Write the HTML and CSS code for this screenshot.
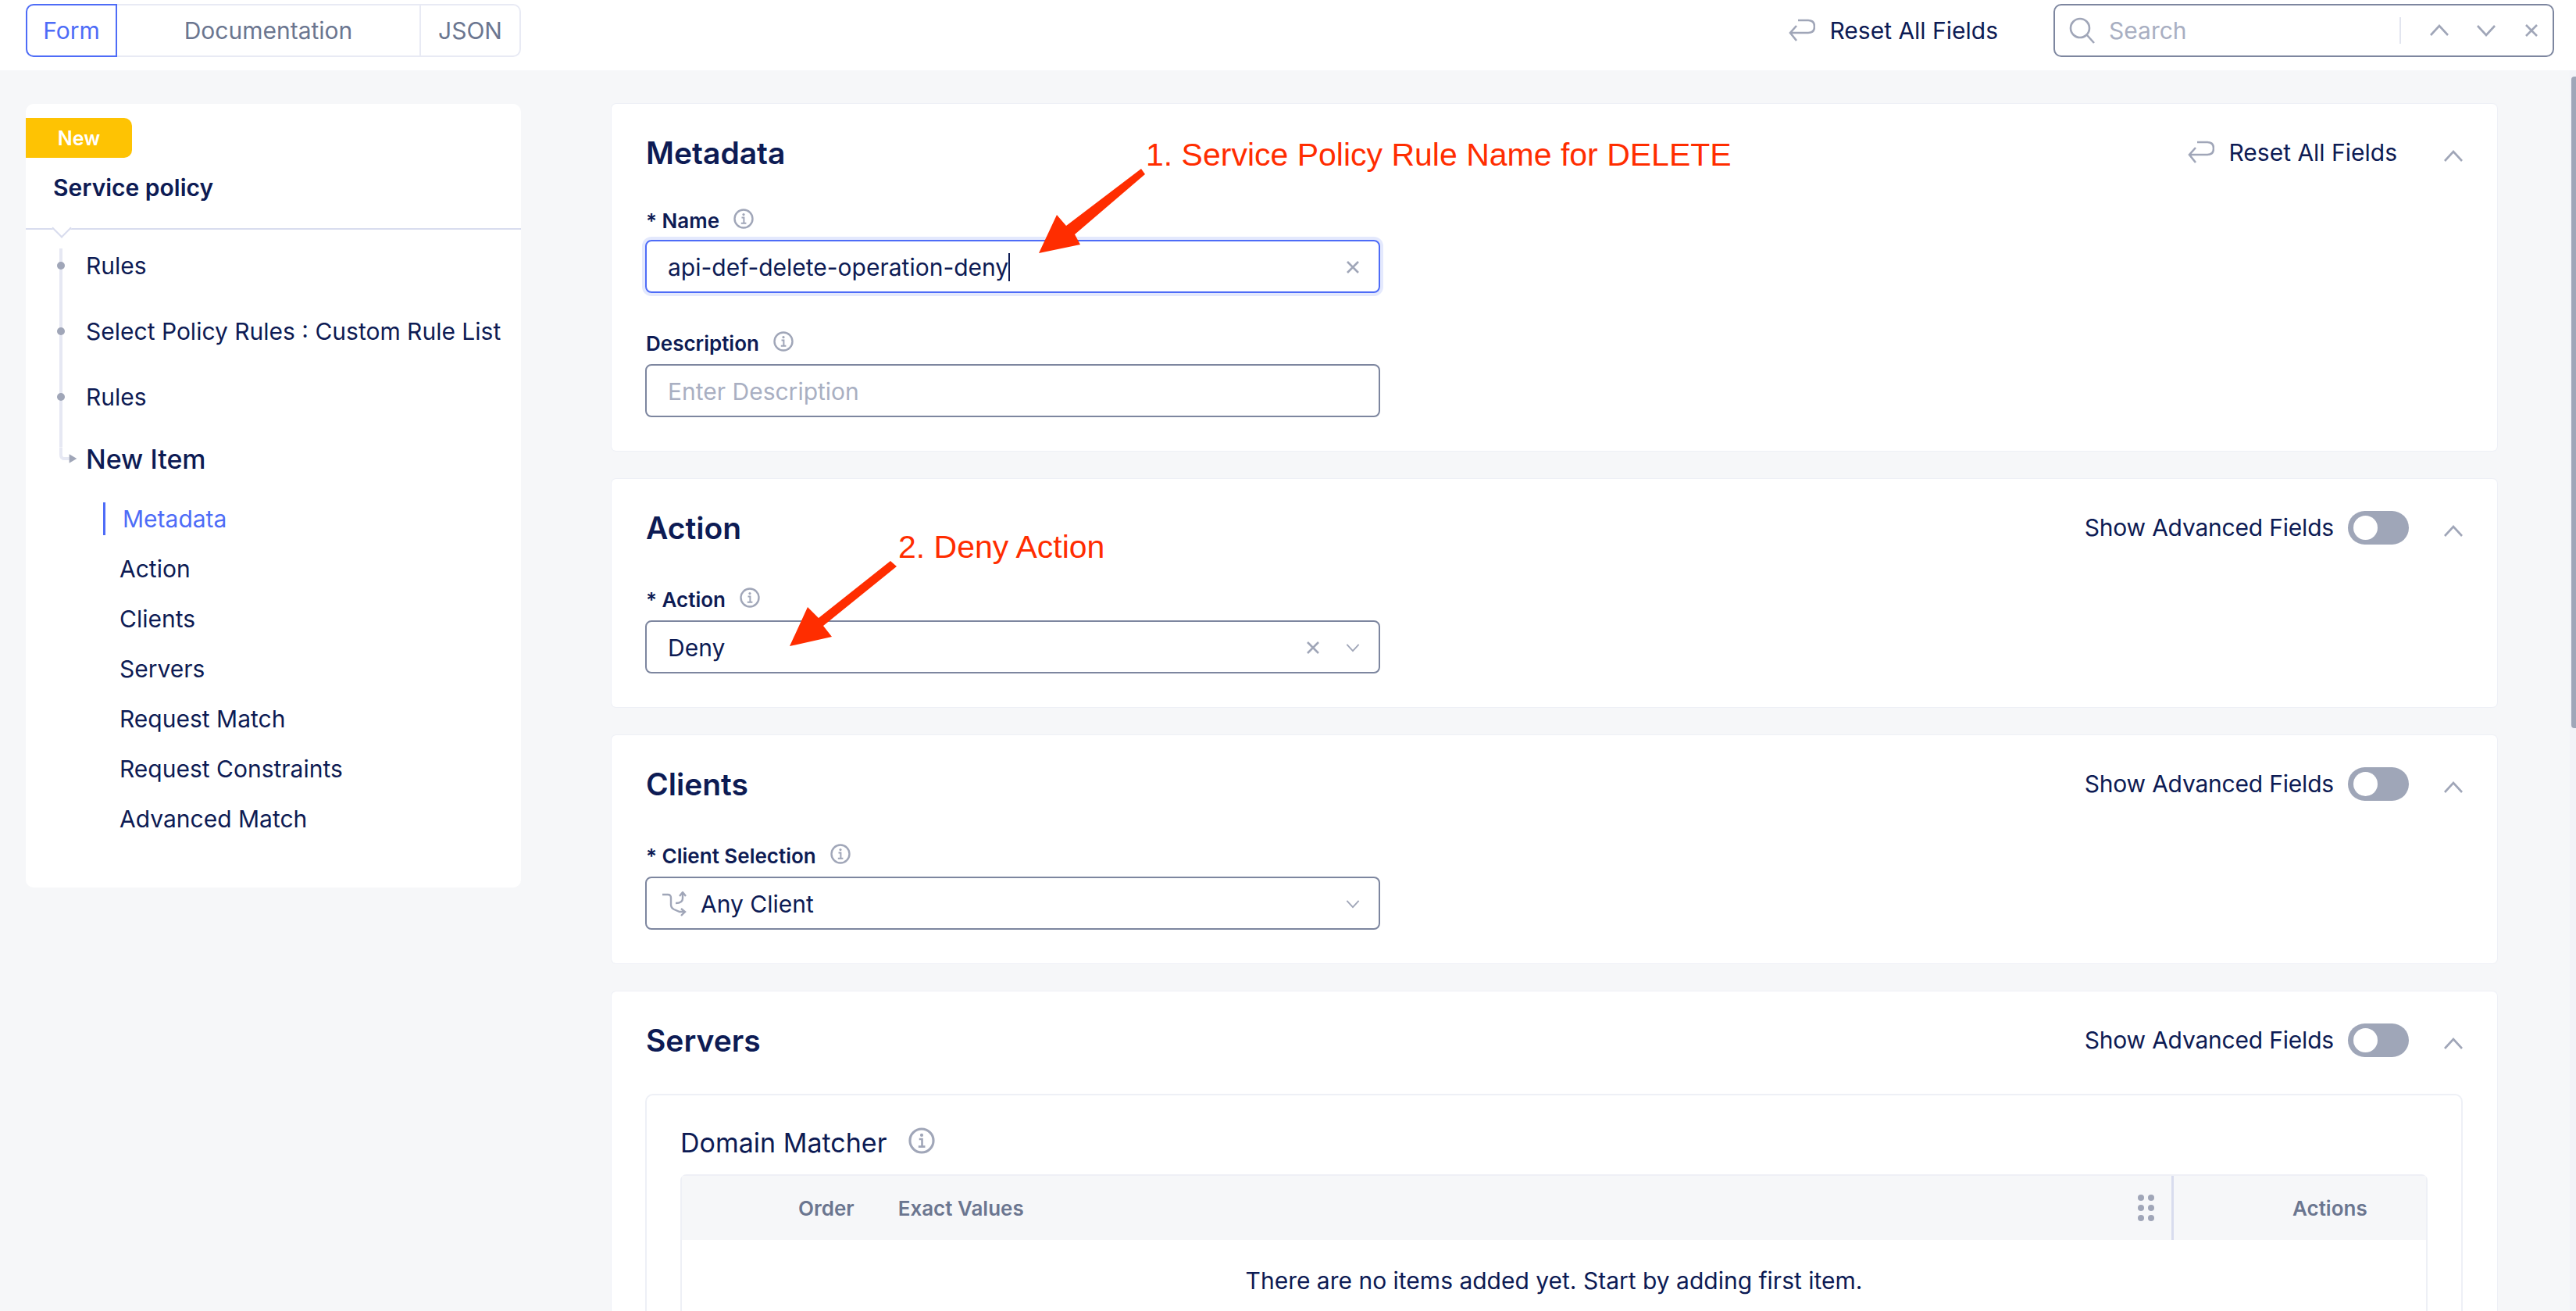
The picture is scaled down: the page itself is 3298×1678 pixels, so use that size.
FILE: index.html
```html
<!DOCTYPE html>
<html lang="en">
<head>
  <meta charset="UTF-8" />
  <title>Service policy</title>
  <link rel="stylesheet" href="styles.css">
</head>
<body>
  <svg width="0" height="0" class="defs">
    <symbol id="i-reset" viewBox="0 0 34 30"><path d="M12 2H25Q33 2 33 10T25 18H2M10 9L2 18L10 28" fill="none" stroke="currentColor" stroke-width="2.6"/></symbol>
    <symbol id="i-up" viewBox="0 0 26 16"><path d="M2 14L13 2L24 14" fill="none" stroke="currentColor" stroke-width="2.6"/></symbol>
    <symbol id="i-down" viewBox="0 0 26 16"><path d="M2 2L13 14L24 2" fill="none" stroke="currentColor" stroke-width="2.6"/></symbol>
    <symbol id="i-x" viewBox="0 0 18 18"><path d="M2 2L16 16M16 2L2 16" fill="none" stroke="currentColor" stroke-width="2.6"/></symbol>
    <symbol id="i-info" viewBox="0 0 26 26"><circle cx="13" cy="13" r="11.5" fill="none" stroke="currentColor" stroke-width="2.4"/><circle cx="13" cy="7.6" r="1.6" fill="currentColor"/><path d="M10.5 11.5H13.4V18.6M9.8 18.8H16.4" fill="none" stroke="currentColor" stroke-width="2"/></symbol>
  </svg>

  <header class="topbar">
    <div class="tabs">
      <div class="tab tab-active">Form</div>
      <div class="tab tab-docs">Documentation</div>
      <div class="tab tab-json">JSON</div>
    </div>
    <div class="topbar-right">
      <div class="reset"><svg class="ico-reset"><use href="#i-reset"/></svg><span>Reset All Fields</span></div>
      <div class="search">
        <svg class="ico-search" viewBox="0 0 34 34"><circle cx="14" cy="14" r="12" fill="none" stroke="currentColor" stroke-width="2.6"/><path d="M23 23L32 33" stroke="currentColor" stroke-width="2.6"/></svg>
        <span class="search-text">Search</span>
        <span class="search-sep"></span>
        <svg class="ico-chev"><use href="#i-up"/></svg>
        <svg class="ico-chev"><use href="#i-down"/></svg>
        <svg class="ico-x"><use href="#i-x"/></svg>
      </div>
    </div>
  </header>

  <div class="page">
    <aside class="side">
      <div class="side-head">
        <div class="badge">New</div>
        <div class="side-title">Service policy</div>
      </div>
      <div class="side-nav">
        <ul class="steps">
          <li><i class="dot"></i>Rules</li>
          <li><i class="dot"></i>Select Policy Rules : Custom Rule List</li>
          <li><i class="dot"></i>Rules</li>
        </ul>
        <div class="step-current">
          <svg class="elbow" viewBox="0 0 35 30"><path d="M2 0V10Q2 15 7 15H13" fill="none" stroke="#e6e8f3" stroke-width="4"/><path d="M13 9L23 15L13 21Z" fill="#a0a6b8"/></svg>
          <span>New Item</span>
        </div>
        <ul class="sub">
          <li class="sub-active">Metadata</li>
          <li>Action</li>
          <li>Clients</li>
          <li>Servers</li>
          <li>Request Match</li>
          <li>Request Constraints</li>
          <li>Advanced Match</li>
        </ul>
      </div>
    </aside>

    <main class="main">
      <section class="card card-meta">
        <div class="card-head">
          <h2>Metadata</h2>
          <div class="reset"><svg class="ico-reset"><use href="#i-reset"/></svg><span>Reset All Fields</span></div>
          <svg class="ico-chev head-chev"><use href="#i-up"/></svg>
        </div>
        <div class="field field-name">
          <label class="label">* Name <svg class="ico-info"><use href="#i-info"/></svg></label>
          <div class="input input-focus"><span class="value">api-def-delete-operation-deny</span><i class="caret"></i><svg class="ico-x push"><use href="#i-x"/></svg></div>
        </div>
        <div class="field field-desc">
          <label class="label">Description <svg class="ico-info"><use href="#i-info"/></svg></label>
          <div class="input"><span class="placeholder">Enter Description</span></div>
        </div>
      </section>

      <section class="card">
        <div class="card-head">
          <h2>Action</h2>
          <div class="adv"><span>Show Advanced Fields</span><i class="toggle"></i></div>
          <svg class="ico-chev head-chev"><use href="#i-up"/></svg>
        </div>
        <div class="field">
          <label class="label">* Action <svg class="ico-info"><use href="#i-info"/></svg></label>
          <div class="input"><span class="value">Deny</span><svg class="ico-x push sel-x"><use href="#i-x"/></svg><svg class="ico-caret"><use href="#i-down"/></svg></div>
        </div>
      </section>

      <section class="card">
        <div class="card-head">
          <h2>Clients</h2>
          <div class="adv"><span>Show Advanced Fields</span><i class="toggle"></i></div>
          <svg class="ico-chev head-chev"><use href="#i-up"/></svg>
        </div>
        <div class="field">
          <label class="label">* Client Selection <svg class="ico-info"><use href="#i-info"/></svg></label>
          <div class="input input-icon">
            <svg class="ico-route" viewBox="0 0 32 32"><path d="M1 4H8Q12 4 12 8V17Q12 21 16 23L23 26H28M25 22L30 26L25 31" fill="none" stroke="currentColor" stroke-width="2.4"/><path d="M18 15Q27 15 27 9V2M23 6L27 1L31 6" fill="none" stroke="currentColor" stroke-width="2.4"/></svg>
            <span class="value">Any Client</span><svg class="ico-caret caret-end"><use href="#i-down"/></svg>
          </div>
        </div>
      </section>

      <section class="card card-servers">
        <div class="card-head">
          <h2>Servers</h2>
          <div class="adv"><span>Show Advanced Fields</span><i class="toggle"></i></div>
          <svg class="ico-chev head-chev"><use href="#i-up"/></svg>
        </div>
        <div class="matcher">
          <div class="matcher-title">Domain Matcher <svg class="ico-info-lg"><use href="#i-info"/></svg></div>
          <div class="table">
            <div class="thead">
              <span class="th-order">Order</span>
              <span class="th-values">Exact Values</span>
              <svg class="grip" viewBox="0 0 21 34"><g fill="#a0a6b8"><circle cx="4" cy="4" r="4"/><circle cx="17" cy="4" r="4"/><circle cx="4" cy="17" r="4"/><circle cx="17" cy="17" r="4"/><circle cx="4" cy="30" r="4"/><circle cx="17" cy="30" r="4"/></g></svg>
              <span class="th-actions">Actions</span>
            </div>
            <div class="empty">There are no items added yet. Start by adding first item.</div>
          </div>
        </div>
      </section>
    </main>
  </div>

  <div class="scrollbar"><div class="scroll-thumb"></div></div>

  <!-- red notes drawn over the screenshot -->
  <svg class="arrows" viewBox="0 0 3298 1678">
    <polygon points="1330,324 1353,275 1365,289 1461,216 1466,223 1376,300 1383,313"/>
    <polygon points="1011,827 1034,777 1048,791 1140,718 1148,725 1054,801 1065,815"/>
  </svg>
  <div class="note note-one">1. Service Policy Rule Name for DELETE</div>
  <div class="note note-two">2. Deny Action</div>
</body>
</html>
```

FILE: styles.css
```css
* {
  box-sizing: border-box;
}
html, body {
  margin: 0;
  height: 100%;
}
body {
  position: relative;
  overflow: hidden;
  background: #f6f7f9;
  color: #0d1b54;
  font-family: Inter, "Noto Sans", sans-serif;
  font-size: 30px;
}
ul {
  list-style: none;
  margin: 0;
  padding: 0;
}
svg {
  flex: none;
  display: block;
}
.defs {
  position: absolute;
}

/* top bar */
.topbar {
  height: 90px;
  background: #fff;
  display: flex;
  align-items: flex-start;
  justify-content: space-between;
  padding: 5px 28px 0 33px;
}
.tabs {
  width: 634px;
  height: 68px;
  display: flex;
  border: 2px solid #e8eaf4;
  border-radius: 10px;
  color: #6b7690;
}
.tab {
  display: flex;
  align-items: center;
  justify-content: center;
}
.tab-active {
  width: 117px;
  margin: -2px 0 -2px -2px;
  border: 2px solid #4e6cf7;
  border-radius: 10px 0 0 10px;
  color: #4e6cf7;
}
.tab-docs {
  flex: 1;
  border-right: 2px solid #e8eaf4;
}
.tab-json {
  width: 126px;
}
.topbar-right {
  display: flex;
  align-items: center;
  gap: 71px;
}
.reset {
  display: flex;
  align-items: center;
  gap: 18px;
}
.ico-reset {
  width: 34px;
  height: 30px;
  color: #a0a6b8;
}
.search {
  width: 641px;
  height: 68px;
  display: flex;
  align-items: center;
  border: 2px solid #7d869f;
  border-radius: 10px;
  padding-left: 18px;
  color: #a0a6b8;
}
.ico-search {
  width: 34px;
  height: 34px;
}
.search-text {
  margin-left: 17px;
  width: 372px;
  color: #a9afc2;
}
.search-sep {
  width: 2px;
  height: 34px;
  background: #e2e5ef;
  margin-right: 36px;
}
.ico-chev {
  width: 26px;
  height: 16px;
  color: #a0a6b8;
}
.search .ico-chev {
  margin-right: 34px;
}
.search .ico-x {
  margin-left: 2px;
}
.ico-x {
  width: 18px;
  height: 18px;
  color: #a0a6b8;
}

/* page columns */
.page {
  display: flex;
  align-items: flex-start;
  padding: 43px 0 0 33px;
  gap: 116px;
}
.side {
  width: 634px;
  flex: none;
  height: 1003px;
  background: #fff;
  border-radius: 10px;
}
.side-head {
  position: relative;
  height: 161px;
  padding-top: 18px;
  border-bottom: 2px solid #d8dcee;
}
.side-head::after {
  /* notch under the divider */
  content: "";
  position: absolute;
  left: 37px;
  bottom: -9px;
  width: 16px;
  height: 16px;
  background: #fff;
  border-right: 2px solid #d8dcee;
  border-bottom: 2px solid #d8dcee;
  transform: rotate(45deg);
}
.badge {
  width: 136px;
  height: 51px;
  background: #fec303;
  border-radius: 0 10px 10px 0;
  color: #fff;
  font-size: 25px;
  font-weight: 600;
  display: flex;
  align-items: center;
  justify-content: center;
}
.side-title {
  margin: 20px 0 0 35px;
  font-size: 30px;
  font-weight: 600;
  line-height: 36px;
}
.side-nav {
  padding-top: 24px;
}
.steps {
  margin-left: 43px;
  border-left: 4px solid #e6e8f3;
  padding-bottom: 42px;
}
.steps li {
  height: 44px;
  margin-bottom: 40px;
  display: flex;
  align-items: center;
  padding-left: 30px;
  position: relative;
  white-space: nowrap;
}
.steps li:last-child {
  margin-bottom: 0;
}
.dot {
  position: absolute;
  left: -7px;
  width: 10px;
  height: 10px;
  border-radius: 50%;
  background: #a0a6b8;
}
.step-current {
  height: 30px;
  display: flex;
  align-items: center;
  margin-left: 43px;
  font-size: 34px;
  font-weight: 500;
}
.elbow {
  width: 34px;
  height: 30px;
}
.sub {
  margin: 41px 0 0 99px;
}
.sub li {
  height: 42px;
  margin-bottom: 22px;
  display: flex;
  align-items: center;
  border-left: 3px solid transparent;
  padding-left: 18px;
}
.sub .sub-active {
  border-left-color: #4e6cf7;
  padding-left: 22px;
  color: #4e6cf7;
}

/* main cards */
.main {
  width: 2414px;
  flex: none;
  display: flex;
  flex-direction: column;
  gap: 36px;
}
.card {
  background: #fff;
  border-radius: 6px;
  box-shadow: 0 0 0 1px #eef0f6;
  padding: 0 44px 43px;
}
.card-head {
  height: 124px;
  display: flex;
  align-items: center;
  margin-bottom: 5px;
}
.card-head h2 {
  margin: 0 auto 0 0;
  font-size: 39px;
  font-weight: 600;
}
.head-chev {
  margin: 10px -1px 0 44px;
}
.card-head .reset {
  margin-right: 15px;
}
.adv {
  display: flex;
  align-items: center;
  gap: 18px;
  letter-spacing: -0.2px;
}
.toggle {
  width: 78px;
  height: 43px;
  border-radius: 22px;
  background: #9fa6b8;
  position: relative;
}
.toggle::after {
  content: "";
  position: absolute;
  left: 7px;
  top: 6px;
  width: 31px;
  height: 31px;
  border-radius: 50%;
  background: #fff;
}
.label {
  height: 48px;
  margin-bottom: 4px;
  padding-top: 2px;
  display: flex;
  align-items: center;
  gap: 18px;
  font-size: 26px;
  font-weight: 600;
}
.ico-info {
  width: 26px;
  height: 26px;
  color: #a0a6b8;
  margin-top: -4px;
}
.input {
  width: 941px;
  height: 68px;
  margin-left: -1px;
  display: flex;
  align-items: center;
  border: 2px solid #7d869f;
  border-radius: 8px;
  padding: 2px 24px 0 27px;
}
.input-focus {
  border-color: #4e6cf7;
  box-shadow: 0 0 0 4px #e4e9fd;
}
.input-icon {
  padding-left: 19px;
}
.card-meta .card-head {
  margin-bottom: 0;
}
.field-name .label {
  margin-bottom: 2px;
}
.field-desc {
  margin-top: 39px;
}
.caret {
  width: 2px;
  height: 36px;
  background: #0d1b54;
}
.placeholder {
  color: #a9afc2;
}
.push {
  margin-left: auto;
}
.sel-x {
  margin-right: 31px;
}
.ico-caret {
  width: 18px;
  height: 12px;
  color: #a0a6b8;
  margin-left: 2px;
}
.caret-end {
  margin-left: auto;
}
.ico-route {
  width: 32px;
  height: 32px;
  color: #a0a6b8;
  margin-right: 18px;
}

/* domain matcher */
.card-servers {
  padding-bottom: 60px;
}
.card-servers .card-head {
  margin-bottom: 7px;
}
.matcher {
  border: 2px solid #eef0f6;
  border-radius: 10px;
  margin-left: -1px;
  padding: 0 43px 40px 43px;
}
.matcher-title {
  height: 101px;
  padding-top: 20px;
  display: flex;
  align-items: center;
  gap: 28px;
  font-size: 34px;
}
.ico-info-lg {
  width: 34px;
  height: 34px;
  color: #a0a6b8;
  margin-top: -6px;
}
.table {
  border: 2px solid #eef0f6;
  border-radius: 8px;
  height: 300px;
}
.thead {
  height: 82px;
  background: #f6f7f9;
  display: flex;
  align-items: center;
  color: #6b7690;
  font-size: 26px;
  font-weight: 600;
}
.th-order {
  margin-left: 149px;
}
.th-values {
  margin-left: 56px;
}
.grip {
  width: 21px;
  height: 34px;
  margin-left: auto;
  margin-right: 22px;
}
.th-actions {
  align-self: stretch;
  width: 326px;
  padding-left: 152px;
  border-left: 3px solid #d8dcee;
  display: flex;
  align-items: center;
}
.empty {
  text-align: center;
  margin-top: 34px;
}

/* scrollbar */
.scrollbar {
  position: absolute;
  top: 90px;
  right: 0;
  bottom: 0;
  width: 8px;
  background: #f2f3f8;
}
.scroll-thumb {
  margin: 8px 0 0 2px;
  height: 834px;
  background: #9fa6b8;
  border-radius: 4px 0 0 4px;
}

/* annotations */
.arrows {
  position: absolute;
  left: 0;
  top: 0;
  width: 3298px;
  height: 1678px;
  fill: #ff2d00;
  pointer-events: none;
}
.note {
  position: absolute;
  color: #ff2d00;
  font-family: "Liberation Sans", Arial, sans-serif;
  font-size: 41px;
  line-height: 50px;
  white-space: nowrap;
}
.note-one {
  left: 1467px;
  top: 173px;
}
.note-two {
  left: 1150px;
  top: 675px;
}
```
